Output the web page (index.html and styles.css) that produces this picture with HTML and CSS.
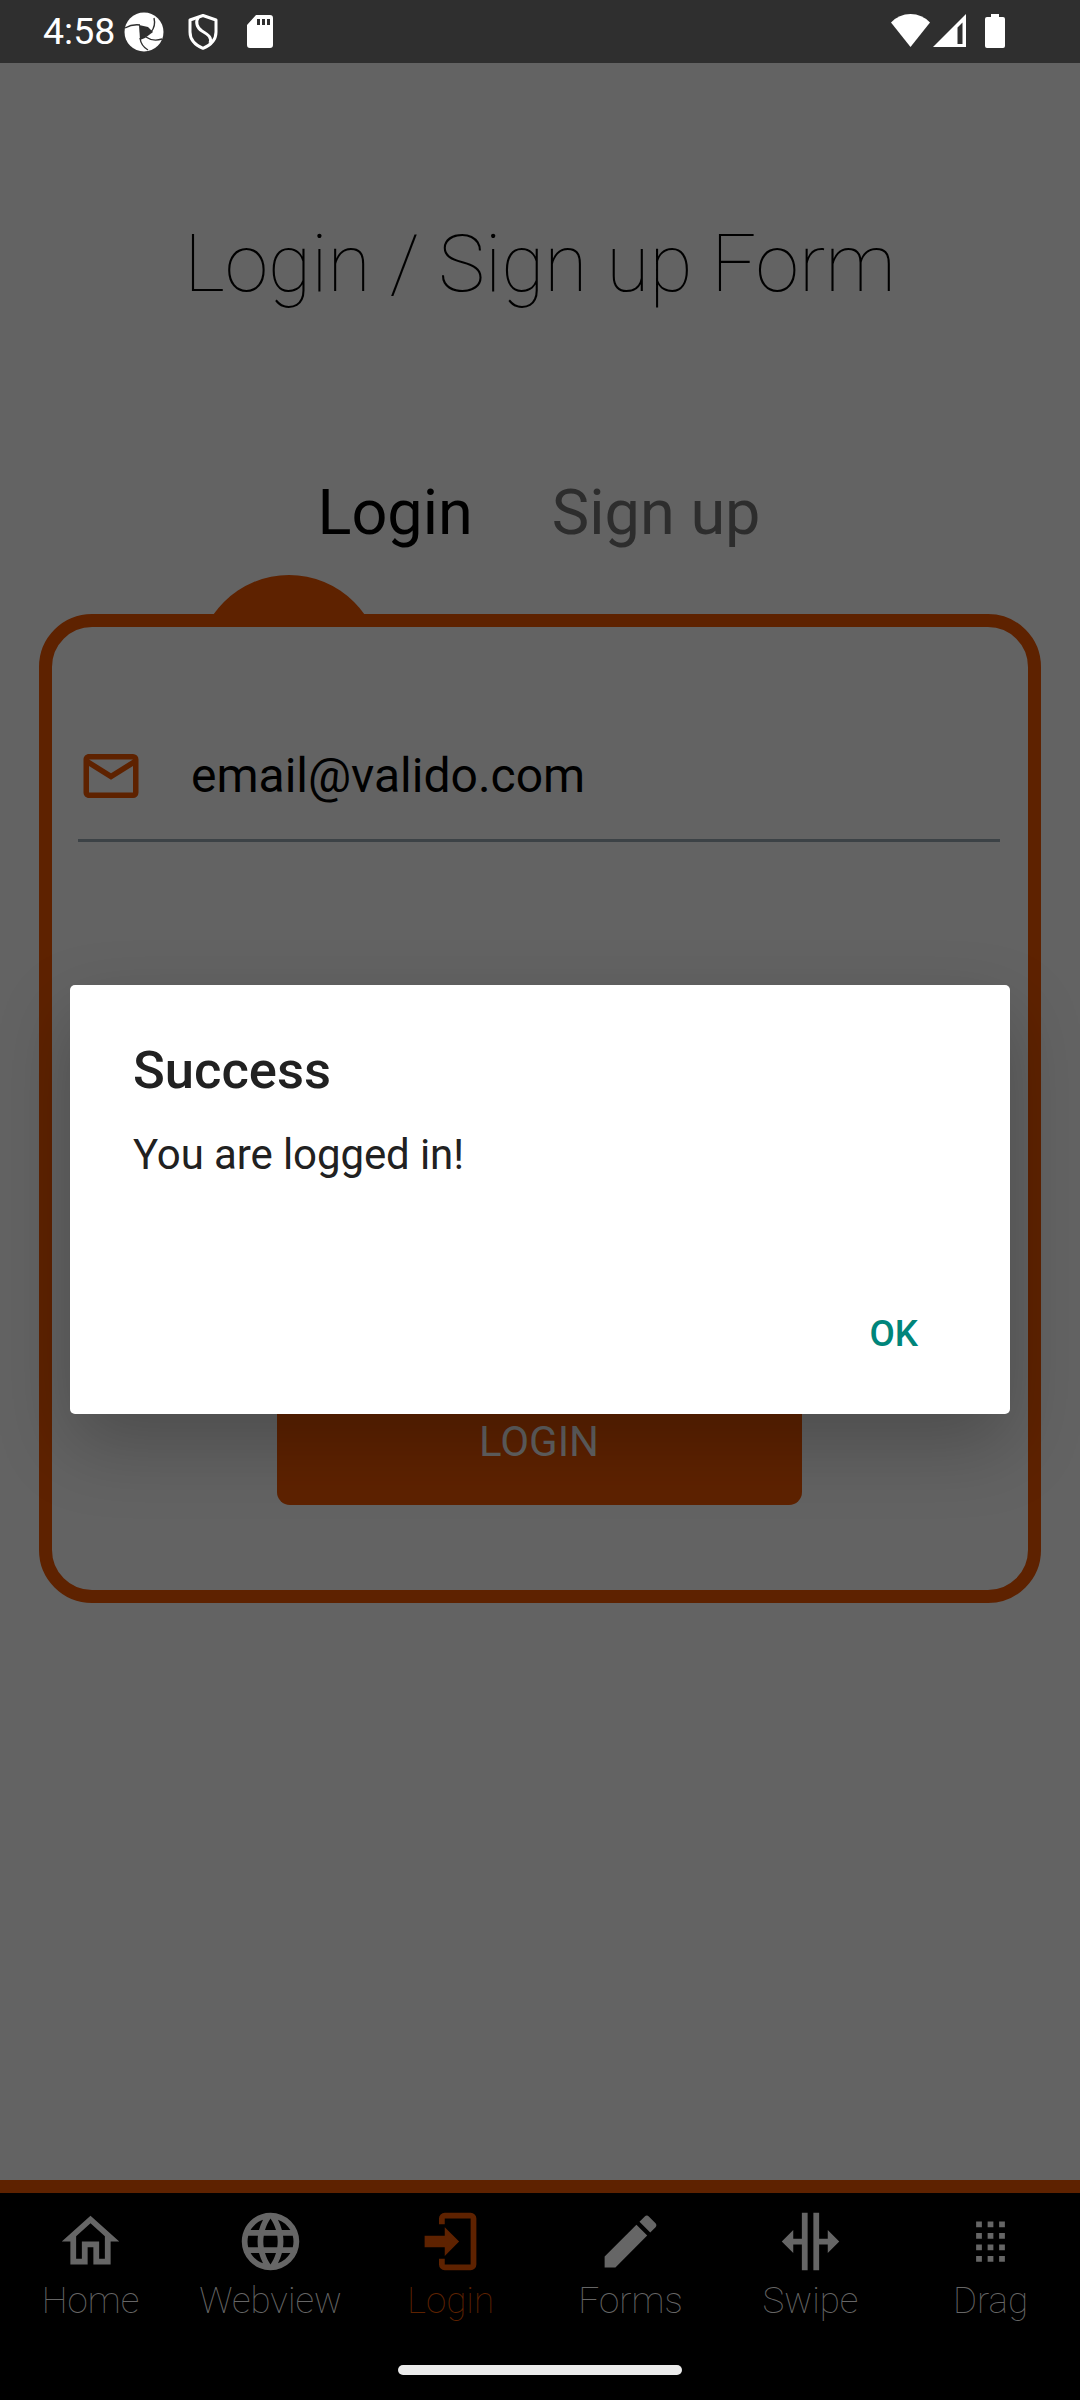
FILE: index.html
```html
<!DOCTYPE html>
<html lang="en">
<head>
<meta charset="utf-8">
<title>Login / Sign up Form</title>
<link rel="stylesheet" href="styles.css">
</head>
<body>
<div class="screen">
  <header class="status">
    <span class="clock">4:58</span>
    <svg class="aperture" viewBox="0 0 40 40" width="40" height="40"><circle cx="20" cy="20" r="19.5" fill="#fff"/><path d="M15 13L24 15L29 20L21 26L16 28Z" fill="#2f2f2f"/><path d="M1 16Q8 12 16 13M30 6Q32 14 27 20M38 27Q29 30 22 25M24 38Q17 34 16 26" fill="none" stroke="#2f2f2f" stroke-width="1.4"/></svg>
    <svg class="shield" viewBox="0 0 30 36" width="30" height="36"><path d="M15 1.5L28 6V18C28 25 23 31 15 34.3C7 31 2 25 2 18V6Z" fill="none" stroke="#fff" stroke-width="3" stroke-linejoin="round"/><path d="M10.500 3C7 8 9 14 14 17C21 21 24 24 22 29" fill="none" stroke="#fff" stroke-width="3"/></svg>
    <svg class="sd" viewBox="0 0 26 33" width="26" height="33"><path fill="#fff" fill-rule="evenodd" d="M9 0H23Q26 0 26 3V30Q26 33 23 33H3Q0 33 0 30V10ZM10 4V10H13V4ZM15 4V10H18V4ZM20 4V10H23V4Z"/></svg>
    <span class="spacer"></span>
    <svg class="wifi" viewBox="0 0 39 33" width="39" height="33"><path fill="#fff" d="M0 8.500Q8 0 19.500 0T39 8.500L19.500 33Z"/></svg>
    <svg class="signal" viewBox="0 0 33 33" width="33" height="33"><path fill="#fff" fill-rule="evenodd" d="M0 33L33 0V33ZM24.500 30H29.500V8.500L24.500 13.500Z"/></svg>
    <svg class="battery" viewBox="0 0 20 34" width="20" height="34"><path fill="#fff" d="M6 0H14V3H18Q20 3 20 5V32Q20 34 18 34H2Q0 34 0 32V5Q0 3 2 3H6Z"/></svg>
  </header>
  <main class="content">
    <h1 class="title">Login / Sign up Form</h1>
    <div class="tabs"><span class="tab active">Login</span><span class="tab">Sign up</span></div>
    <div class="bump-clip"><div class="bump"></div></div>
    <section class="card">
      <div class="field">
        <svg viewBox="0 0 24 24" width="66" height="66"><path d="M4,4H20A2,2 0 0,1 22,6V18A2,2 0 0,1 20,20H4C2.89,20 2,19.1 2,18V6C2,4.89 2.89,4 4,4M12,11L20,6H4L12,11M4,18H20V8.37L12,13.36L4,8.37V18Z"/></svg>
        <span class="email">email@valido.com</span>
      </div>
      <div class="button">LOGIN</div>
    </section>
  </main>
  <nav class="nav">
    <div class="item"><svg viewBox="0 0 24 24" width="69" height="69"><path d="M12,5.69L17,10.19V18H15V12H9V18H7V10.19L12,5.69M12,3L2,12H5V20H11V14H13V20H19V12H22"/></svg><span>Home</span></div>
    <div class="item"><svg viewBox="0 0 24 24" width="69" height="69"><path d="M16.36,14C16.44,13.34 16.5,12.68 16.5,12C16.5,11.32 16.44,10.66 16.36,10H19.74C19.9,10.64 20,11.31 20,12C20,12.69 19.9,13.36 19.74,14M14.59,19.56C15.19,18.45 15.65,17.25 15.97,16H18.92C17.96,17.65 16.43,18.93 14.59,19.56M14.34,14H9.66C9.56,13.34 9.5,12.68 9.5,12C9.5,11.32 9.56,10.65 9.66,10H14.34C14.43,10.65 14.5,11.32 14.5,12C14.5,12.68 14.43,13.34 14.34,14M12,19.96C11.17,18.76 10.5,17.43 10.09,16H13.91C13.5,17.43 12.83,18.76 12,19.96M8,8H5.08C6.03,6.34 7.57,5.06 9.4,4.44C8.8,5.55 8.35,6.75 8,8M5.08,16H8C8.35,17.25 8.8,18.45 9.4,19.56C7.57,18.93 6.03,17.65 5.08,16M4.26,14C4.1,13.36 4,12.69 4,12C4,11.31 4.1,10.64 4.26,10H7.64C7.56,10.66 7.5,11.32 7.5,12C7.5,12.68 7.56,13.34 7.64,14M12,4.03C12.83,5.23 13.5,6.57 13.91,8H10.09C10.5,6.57 11.17,5.23 12,4.03M18.92,8H15.97C15.65,6.75 15.19,5.55 14.59,4.44C16.43,5.07 17.96,6.34 18.92,8M12,2C6.47,2 2,6.5 2,12A10,10 0 0,0 12,22A10,10 0 0,0 22,12A10,10 0 0,0 12,2Z"/></svg><span>Webview</span></div>
    <div class="item current"><svg viewBox="0 0 24 24" width="69" height="69"><path d="M10,17V14H3V10H10V7L15,12L10,17M10,2H19A2,2 0 0,1 21,4V20A2,2 0 0,1 19,22H10A2,2 0 0,1 8,20V18H10V20H19V4H10V6H8V4A2,2 0 0,1 10,2Z"/></svg><span>Login</span></div>
    <div class="item"><svg viewBox="0 0 24 24" width="69" height="69"><path d="M20.71,7.04C21.1,6.65 21.1,6 20.71,5.63L18.37,3.29C18,2.9 17.35,2.9 16.96,3.29L15.12,5.12L18.87,8.87M3,17.25V21H6.75L17.81,9.93L14.06,6.18L3,17.25Z"/></svg><span>Forms</span></div>
    <div class="item"><svg viewBox="0 0 24 24" width="69" height="69"><path d="M18,16V13H15V22H13V2H15V11H18V8L22,12L18,16M2,12L6,16V13H9V22H11V2H9V11H6V8L2,12Z"/></svg><span>Swipe</span></div>
    <div class="item"><svg viewBox="0 0 24 24" width="69" height="69"><path d="M7,5H9V7H7ZM11,5H13V7H11ZM15,5H17V7H15ZM7,9H9V11H7ZM11,9H13V11H11ZM15,9H17V11H15ZM7,13H9V15H7ZM11,13H13V15H11ZM15,13H17V15H15ZM7,17H9V19H7ZM11,17H13V19H11ZM15,17H17V19H15Z"/></svg><span>Drag</span></div>
  </nav>
  <div class="gesture"><div class="pill"></div></div>
  <div class="dialog">
    <div class="dialog-title">Success</div>
    <div class="dialog-text">You are logged in!</div>
    <div class="dialog-actions">OK</div>
  </div>
</div>
</body>
</html>
```
FILE: styles.css
```css
* { box-sizing: border-box; }
body { margin: 0; font-family: Roboto, sans-serif; }
svg { display: block; flex: none; }
.screen { position: relative; width: 1080px; height: 2400px; overflow: hidden; display: flex; flex-direction: column; background: #636363; }
.status { height: 63px; flex: none; display: flex; align-items: flex-start; background: #2f2f2f; padding: 0 75px 0 43px; }
.clock { width: 81px; font-size: 37.5px; line-height: 63px; color: #fff; }
.aperture { margin-top: 12px; }
.shield { margin: 14px 0 0 24px; }
.sd { margin: 15px 0 0 29px; }
.spacer { flex: 1; }
.wifi { margin-top: 14px; }
.signal { margin: 14px 19px 0 3px; }
.battery { margin-top: 14px; }
.content { height: 2117px; flex: none; padding: 0 39px; }
.title { margin: 0; padding-top: 154px; height: 393px; font-size: 78.75px; line-height: 94px; font-weight: 100; text-align: center; color: #000; white-space: nowrap; }
.tabs { display: flex; justify-content: center; gap: 79px; padding: 20px 2px 0 0; height: 119px; font-size: 63px; line-height: 74px; color: #2d2d2d; }
.active { color: #000; }
.bump-clip { height: 39px; overflow: hidden; padding-left: 158px; }
.bump { width: 184px; height: 184px; border-radius: 50%; background: #5e2200; }
.card { height: 989px; border: 13px solid #5e2200; border-radius: 53px; padding: 116px 28px 0 26px; }
.field { display: flex; align-items: center; gap: 47px; height: 99px; padding-bottom: 30px; border-bottom: 3px solid #3c4246; fill: #5e2200; }
.email { font-size: 48px; line-height: 60px; color: #000; }
.button { width: 525px; height: 131px; margin: 532px auto 0; border-radius: 13px; background: #5e2200; color: #636363; font-size: 42px; line-height: 135px; text-align: center; }
.nav { height: 154px; flex: none; display: grid; grid-template-columns: repeat(6, 1fr); border-top: 13px solid #5e2200; background: #000; color: #666; fill: #666; }
.item { display: flex; flex-direction: column; align-items: center; padding-top: 14px; font-size: 36.75px; line-height: 44px; font-weight: 100; }
.item span { margin: 3px 0 0 1px; }
.current { color: #5e2200; fill: #5e2200; }
.gesture { flex: 1; background: #000; display: flex; justify-content: center; padding-top: 31px; }
.pill { width: 284px; height: 10px; border-radius: 5px; background: #ebebeb; }
.dialog { position: absolute; left: 70px; top: 985px; width: 940px; height: 429px; border-radius: 5px; background: #fff; color: #212121; padding: 50px 92px 0 63px; box-shadow: 0 30px 75px rgba(0, 0, 0, .23); }
.dialog-title { font-size: 52.5px; line-height: 70px; font-weight: 500; }
.dialog-text { margin-top: 25px; font-size: 42px; line-height: 50px; letter-spacing: -.1px; }
.dialog-actions { margin-top: 132px; font-size: 36.75px; line-height: 44px; font-weight: 500; text-align: right; color: #00857a; }
```
